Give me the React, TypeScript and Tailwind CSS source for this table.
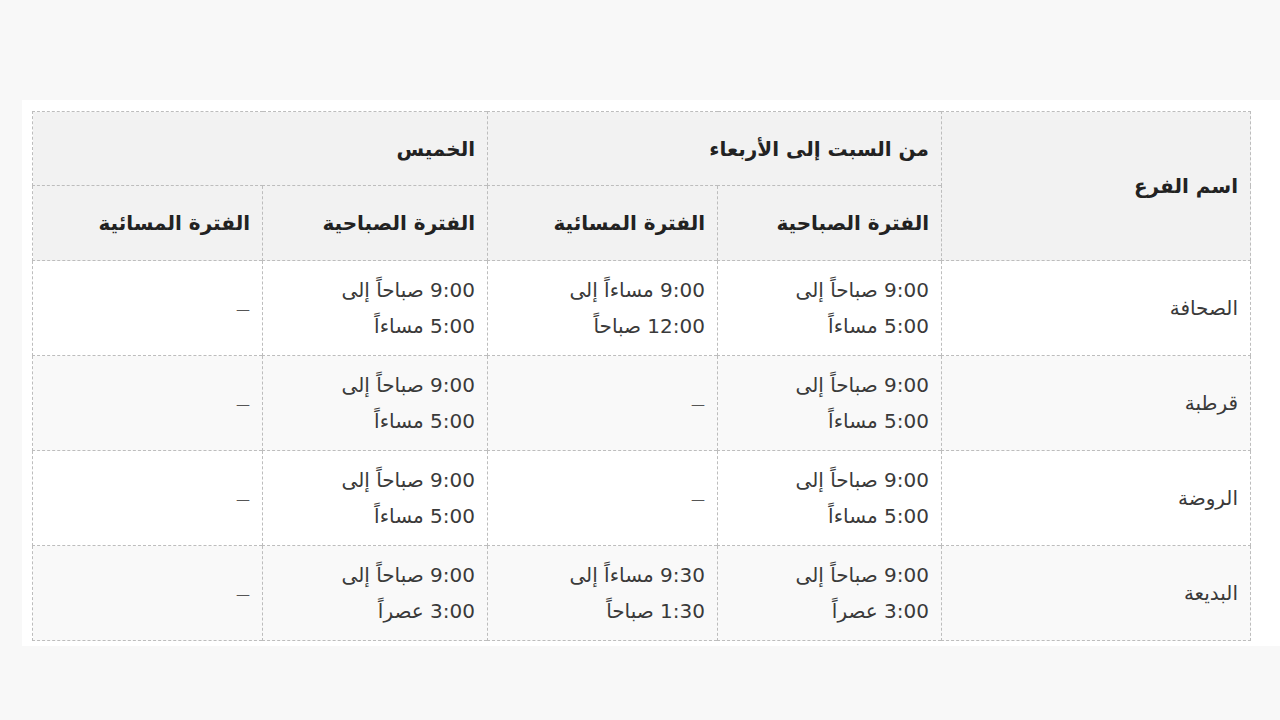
import React from 'react';

type Row = { name: string; cells: string[][] };

const rows: Row[] = [
  {
    name: 'الصحافة',
    cells: [
      ['9:00 صباحاً إلى', '5:00 مساءاً'],
      ['9:00 مساءاً إلى', '12:00 صباحاً'],
      ['9:00 صباحاً إلى', '5:00 مساءاً'],
      [],
    ],
  },
  {
    name: 'قرطبة',
    cells: [['9:00 صباحاً إلى', '5:00 مساءاً'], [], ['9:00 صباحاً إلى', '5:00 مساءاً'], []],
  },
  {
    name: 'الروضة',
    cells: [['9:00 صباحاً إلى', '5:00 مساءاً'], [], ['9:00 صباحاً إلى', '5:00 مساءاً'], []],
  },
  {
    name: 'البديعة',
    cells: [
      ['9:00 صباحاً إلى', '3:00 عصراً'],
      ['9:30 مساءاً إلى', '1:30 صباحاً'],
      ['9:00 صباحاً إلى', '3:00 عصراً'],
      [],
    ],
  },
];

const cell = 'border border-dashed border-[#bdbdbd] px-3 align-middle text-right';

export default function App() {
  return (
    <div className="h-[720px] bg-[#f8f8f8] pt-[100px] pl-[22px] font-['DejaVu_Sans',sans-serif]">
      <div className="h-[546px] overflow-hidden bg-white pt-[11px] pl-[10px] pr-[30px]">
        <table dir="rtl" className="w-[1218px] table-fixed border-collapse text-[20px] leading-9">
          <colgroup>
            <col className="w-[309px]" />
            <col className="w-[224px]" />
            <col className="w-[230px]" />
            <col className="w-[225px]" />
            <col className="w-[230px]" />
          </colgroup>
          <thead className="bg-[#f2f2f2] font-bold text-[#222]">
            <tr className="h-[74px]">
              <th rowSpan={2} className={cell}>اسم الفرع</th>
              <th colSpan={2} className={cell}>من السبت إلى الأربعاء</th>
              <th colSpan={2} className={cell}>الخميس</th>
            </tr>
            <tr className="h-[75px]">
              <th className={cell}>الفترة الصباحية</th>
              <th className={cell}>الفترة المسائية</th>
              <th className={cell}>الفترة الصباحية</th>
              <th className={cell}>الفترة المسائية</th>
            </tr>
          </thead>
          <tbody className="text-[#3a3a3a]">
            {rows.map((r, i) => (
              <tr key={r.name} className={i % 2 === 1 ? 'h-[95px] bg-[#f9f9f9]' : 'h-[95px] bg-white'}>
                <td className={cell}>{r.name}</td>
                {r.cells.map((c, j) => (
                  <td key={j} className={cell}>
                    {c.length ? (
                      c.map((line) => <div key={line}>{line}</div>)
                    ) : (
                      <span className="text-[14px] text-[#555]">—</span>
                    )}
                  </td>
                ))}
              </tr>
            ))}
          </tbody>
        </table>
      </div>
    </div>
  );
}
